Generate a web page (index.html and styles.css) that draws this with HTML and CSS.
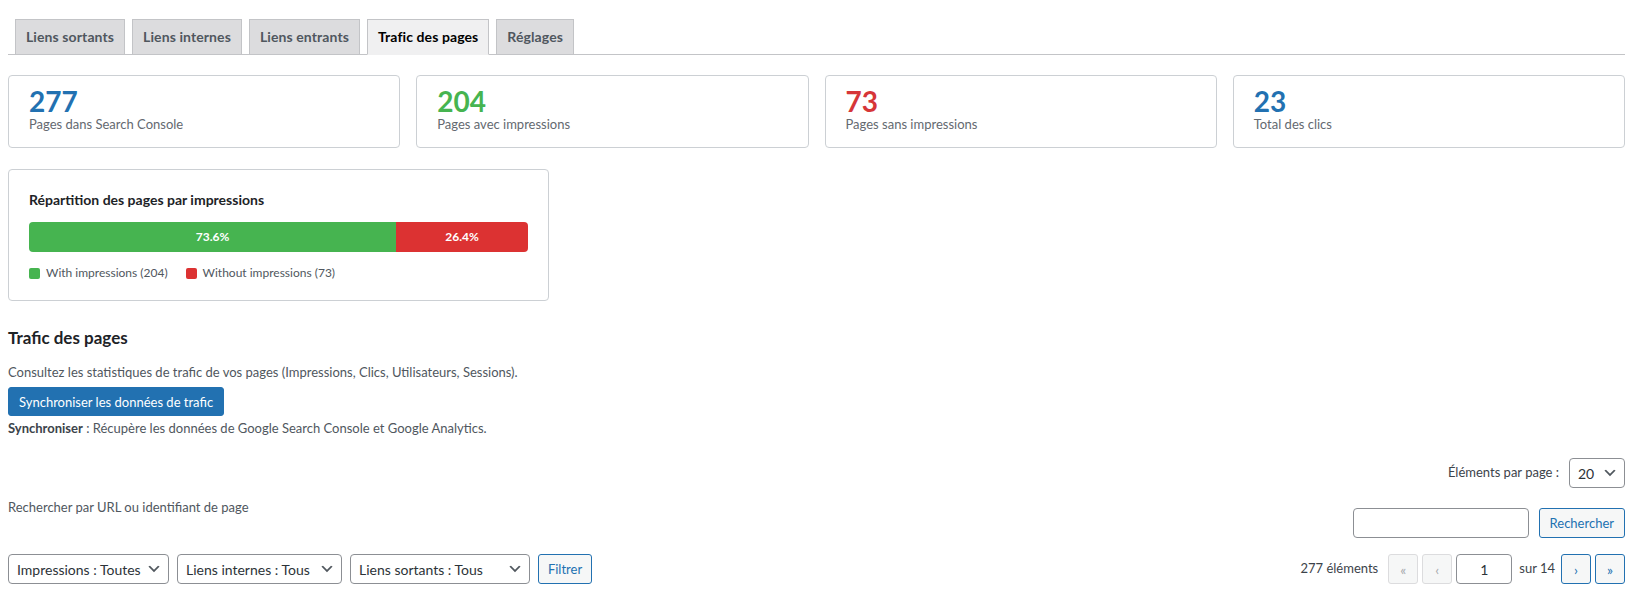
FILE: index.html
```html
<!DOCTYPE html>
<html lang="fr">
<head>
<meta charset="utf-8">
<title>Trafic des pages</title>
<link rel="stylesheet" href="styles.css">
</head>
<body>
<div class="wrap">
  <nav class="tabs">
    <a class="tab">Liens sortants</a>
    <a class="tab">Liens internes</a>
    <a class="tab">Liens entrants</a>
    <a class="tab tab-active">Trafic des pages</a>
    <a class="tab">Réglages</a>
  </nav>

  <div class="stats">
    <div class="card stat">
      <div class="stat-num num-blue">277</div>
      <div class="stat-label">Pages dans Search Console</div>
    </div>
    <div class="card stat">
      <div class="stat-num num-green">204</div>
      <div class="stat-label">Pages avec impressions</div>
    </div>
    <div class="card stat">
      <div class="stat-num num-red">73</div>
      <div class="stat-label">Pages sans impressions</div>
    </div>
    <div class="card stat">
      <div class="stat-num num-blue">23</div>
      <div class="stat-label">Total des clics</div>
    </div>
  </div>

  <div class="card chart">
    <h3 class="chart-title">Répartition des pages par impressions</h3>
    <div class="bar">
      <div class="bar-seg seg-green" style="width:73.6%">73.6%</div>
      <div class="bar-seg seg-red" style="width:26.4%">26.4%</div>
    </div>
    <div class="legend">
      <span class="legend-item"><span class="swatch seg-green"></span>With impressions (204)</span>
      <span class="legend-item"><span class="swatch seg-red"></span>Without impressions (73)</span>
    </div>
  </div>

  <h2 class="section-title">Trafic des pages</h2>
  <p class="desc">Consultez les statistiques de trafic de vos pages (Impressions, Clics, Utilisateurs, Sessions).</p>
  <button class="btn-primary">Synchroniser les données de trafic</button>
  <p class="note"><strong>Synchroniser</strong> : Récupère les données de Google Search Console et Google Analytics.</p>

  <div class="perpage-row">
    <span class="perpage-label">Éléments par page :</span>
    <div class="select select-small"><span>20</span>
      <svg class="chev" viewBox="0 0 20 20" width="16" height="16"><path d="M5 6l5 5 5-5 2 1-7 7-7-7 2-1z" fill="#50575e"/></svg>
    </div>
  </div>

  <div class="search-row">
    <span class="search-hint">Rechercher par URL ou identifiant de page</span>
    <div class="search-box">
      <div class="input search-input"></div>
      <button class="btn-secondary">Rechercher</button>
    </div>
  </div>

  <div class="tablenav">
    <div class="filters">
      <div class="select sel-1"><span>Impressions : Toutes</span>
        <svg class="chev" viewBox="0 0 20 20" width="16" height="16"><path d="M5 6l5 5 5-5 2 1-7 7-7-7 2-1z" fill="#50575e"/></svg>
      </div>
      <div class="select sel-2"><span>Liens internes : Tous</span>
        <svg class="chev" viewBox="0 0 20 20" width="16" height="16"><path d="M5 6l5 5 5-5 2 1-7 7-7-7 2-1z" fill="#50575e"/></svg>
      </div>
      <div class="select sel-3"><span>Liens sortants : Tous</span>
        <svg class="chev" viewBox="0 0 20 20" width="16" height="16"><path d="M5 6l5 5 5-5 2 1-7 7-7-7 2-1z" fill="#50575e"/></svg>
      </div>
      <button class="btn-secondary btn-filter">Filtrer</button>
    </div>
    <div class="pages">
      <span class="count">277 éléments</span>
      <span class="pg-btn pg-disabled">«</span>
      <span class="pg-btn pg-disabled">‹</span>
      <span class="input pg-input">1</span>
      <span class="pg-of">sur 14</span>
      <span class="pg-btn">›</span>
      <span class="pg-btn">»</span>
    </div>
  </div>
  <div class="table-top"></div>
</div>
</body>
</html>
```

FILE: styles.css
```css
* { box-sizing: border-box; }
html, body { margin: 0; padding: 0; background: #fff; }
body {
  font-family: Lato, "Noto Sans", "Liberation Sans", sans-serif;
  font-size: 13px;
  color: #3c434a;
  line-height: 1.5;
}
.wrap { padding: 19px 19px 0 8px; }

/* Tabs */
.tabs {
  display: flex;
  gap: 7px;
  padding-left: 7px;
  border-bottom: 1px solid #c3c4c7;
}
.tab {
  display: block;
  padding: 5px 10px;
  font-size: 14px;
  font-weight: 700;
  letter-spacing: 0.1px;
  line-height: 24px;
  color: #50575e;
  background: #dcdcde;
  border: 1px solid #c3c4c7;
  border-bottom: none;
  text-decoration: none;
}
.tab-active {
  background: #f0f0f1;
  color: #000;
  border-bottom: 1px solid #f0f0f1;
  margin-bottom: -1px;
}

/* Cards */
.card {
  background: #fff;
  border: 1px solid #ccd0d4;
  border-radius: 4px;
}
.stats {
  display: grid;
  grid-template-columns: repeat(4, 1fr);
  gap: 16px;
  margin-top: 20px;
}
.stat { padding: 12px 20px 12px; height: 73px; }
.stat-num {
  font-size: 28px;
  font-weight: 700;
  line-height: 27px;
}
.num-blue { color: #2271b1; }
.num-green { color: #46b450; }
.num-red { color: #d63638; }
.stat-label { color: #646970; font-size: 13px; line-height: 19px; }

.chart {
  width: 541px;
  margin-top: 21px;
  padding: 20px 20px 18px;
  height: 132px;
}
.chart-title {
  margin: 0 0 12px;
  font-size: 14px;
  font-weight: 700;
  line-height: 20px;
  color: #1d2327;
}
.bar {
  display: flex;
  height: 30px;
  border-radius: 4px;
  overflow: hidden;
}
.bar-seg {
  display: flex;
  align-items: center;
  justify-content: center;
  color: #fff;
  font-size: 12px;
  font-weight: 700;
}
.seg-green { background: #46b450; }
.seg-red { background: #dc3232; }
.legend {
  display: flex;
  gap: 18px;
  margin-top: 12px;
  font-size: 12px;
  line-height: 18px;
  color: #50575e;
}
.legend-item { display: flex; align-items: center; gap: 6px; }
.swatch { width: 11px; height: 11px; border-radius: 2px; display: inline-block; }

/* Section */
.section-title {
  margin: 26px 0 0;
  font-size: 17px;
  font-weight: 700;
  line-height: 22px;
  color: #1d2327;
}
.desc { margin: 13px 0 5px; color: #50575e; line-height: 20px; }
.btn-primary {
  display: block;
  font-family: inherit;
  font-size: 13px;
  height: 29px;
  padding: 0 10px;
  color: #fff;
  background: #2271b1;
  border: 1px solid #2271b1;
  border-radius: 3px;
}
.note { margin: 2px 0 0; color: #50575e; line-height: 20px; }
.note strong { font-weight: 700; color: #3c434a; }

/* Controls */
.perpage-row {
  display: flex;
  justify-content: flex-end;
  align-items: center;
  gap: 10px;
  margin-top: 20px;
  color: #3c434a;
}
.select {
  display: flex;
  align-items: center;
  justify-content: space-between;
  height: 30px;
  padding: 0 6px 0 8px;
  border: 1px solid #8c8f94;
  border-radius: 4px;
  font-size: 14px;
  color: #2c3338;
  background: #fff;
}
.select-small { width: 56px; }
.chev { flex: none; }

.search-row {
  display: flex;
  justify-content: space-between;
  align-items: flex-start;
  margin-top: 9px;
}
.search-hint { color: #50575e; line-height: 20px; }
.search-box { display: flex; gap: 10px; margin-top: 11px; }
.input {
  display: block;
  height: 30px;
  border: 1px solid #8c8f94;
  border-radius: 4px;
  background: #fff;
}
.search-input { width: 176px; }
.btn-secondary {
  font-family: inherit;
  font-size: 13px;
  height: 30px;
  padding: 0 10px;
  color: #2271b1;
  background: #f6f7f7;
  border: 1px solid #2271b1;
  border-radius: 3px;
}

.tablenav {
  display: flex;
  justify-content: space-between;
  align-items: center;
  margin-top: 16px;
}
.filters { display: flex; gap: 8px; align-items: center; }
.sel-1 { width: 161px; }
.sel-2 { width: 165px; }
.sel-3 { width: 180px; }
.btn-filter { width: 54px; padding: 0; }

.pages { display: flex; align-items: center; gap: 4px; color: #3c434a; }
.count { margin-right: 6px; }
.pg-btn {
  display: flex;
  align-items: center;
  justify-content: center;
  width: 30px;
  height: 30px;
  border: 1px solid #2271b1;
  border-radius: 3px;
  background: #f6f7f7;
  color: #2271b1;
  font-size: 14px;
}
.pg-disabled { border-color: #dcdcde; color: #a7aaad; }
.pg-input {
  width: 56px;
  display: flex;
  align-items: center;
  justify-content: center;
  color: #2c3338;
  font-size: 14px;
}
.pg-of { margin: 0 2px 0 3px; }
.table-top { border-top: 1px solid #c3c4c7; margin-top: 10px; }
```
